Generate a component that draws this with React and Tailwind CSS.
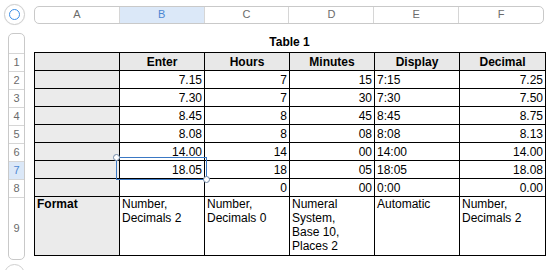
import React from "react";

const cols = ["A", "B", "C", "D", "E", "F"];

const rows = [
  ["7.15", "7", "15", "7:15", "7.25"],
  ["7.30", "7", "30", "7:30", "7.50"],
  ["8.45", "8", "45", "8:45", "8.75"],
  ["8.08", "8", "08", "8:08", "8.13"],
  ["14.00", "14", "00", "14:00", "14.00"],
  ["18.05", "18", "05", "18:05", "18.08"],
  ["", "0", "00", "0:00", "0.00"],
];

export default function App() {
  return (
    <div
      className="w-[550px] h-[270px] bg-white overflow-hidden text-[12px] text-black"
      style={{ fontFamily: '"Liberation Sans", Arial, sans-serif' }}
    >
      {/* top bar */}
      <div className="flex items-center pt-[4px]">
        <div className="ml-[4px] w-[21px] h-[21px] rounded-full border border-[#cfcfcf] bg-white flex items-center justify-center shadow-[0_0_1px_rgba(0,0,0,0.1)]">
          <div className="w-[11px] h-[11px] rounded-full border-[1.5px] border-[#3b8ee6]" />
        </div>
        <div className="ml-[9px] w-[510px] h-[18px] rounded-[5px] border border-[#c9c9c9] flex overflow-hidden text-[11px] text-[#6b6b6b]">
          {cols.map((c, i) => (
            <div
              key={c}
              className={
                "flex-1 flex items-center justify-center " +
                (i > 0 ? "border-l border-[#d6d6d6] " : "") +
                (c === "B" ? "bg-[#dbe8f8] text-[#4a86d2]" : "")
              }
            >
              {c}
            </div>
          ))}
        </div>
      </div>

      <div className="flex mt-[8px]">
        {/* row header strip */}
        <div className="ml-[8px] w-[17px] flex flex-col border border-[#c9c9c9] rounded-[5px] overflow-hidden text-[11px] text-[#6b6b6b] h-[227px]">
          <div className="h-[19px] shrink-0" />
          {[1, 2, 3, 4, 5, 6, 7, 8].map((n) => (
            <div
              key={n}
              className={
                "h-[18px] shrink-0 border-t border-[#d6d6d6] flex items-center justify-center " +
                (n === 7 ? "bg-[#dbe8f8] text-[#4a86d2]" : "")
              }
            >
              {n}
            </div>
          ))}
          <div className="flex-1 border-t border-[#d6d6d6] flex items-center justify-center">
            9
          </div>
        </div>

        {/* table area */}
        <div className="ml-[9px] relative">
          <div className="h-[19px] flex items-end justify-center font-bold text-[12px] pb-[1px] w-[511px]">
            Table 1
          </div>
          <table className="border-collapse table-fixed w-[511px]">
            <colgroup>
              <col className="w-[85px]" />
              <col className="w-[85px]" />
              <col className="w-[85px]" />
              <col className="w-[85px]" />
              <col className="w-[85px]" />
              <col className="w-[86px]" />
            </colgroup>
            <tbody>
              <tr className="h-[18px] bg-[#e8e8e8] font-bold">
                <td className="border border-black p-0" />
                <td className="border border-black p-0 text-center leading-[16px]">Enter</td>
                <td className="border border-black p-0 text-center leading-[16px]">Hours</td>
                <td className="border border-black p-0 text-center leading-[16px]">Minutes</td>
                <td className="border border-black p-0 text-center leading-[16px]">Display</td>
                <td className="border border-black p-0 text-center leading-[16px]">Decimal</td>
              </tr>
              {rows.map((r, i) => (
                <tr key={i} className="h-[18px]">
                  <td className="border border-black p-0 bg-[#ebebeb]" />
                  <td className="border border-black p-0 pr-[2px] text-right leading-[16px]">{r[0]}</td>
                  <td className="border border-black p-0 pr-[2px] text-right leading-[16px]">{r[1]}</td>
                  <td className="border border-black p-0 pr-[2px] text-right leading-[16px]">{r[2]}</td>
                  <td className="border border-black p-0 pl-[2px] text-left leading-[16px]">{r[3]}</td>
                  <td className="border border-black p-0 pr-[2px] text-right leading-[16px]">{r[4]}</td>
                </tr>
              ))}
              <tr className="h-[59px] align-top">
                <td className="border border-black p-0 pl-[2px] bg-[#ebebeb] font-bold leading-[14px]">Format</td>
                <td className="border border-black p-0 pl-[2px] leading-[14px]">Number,<br />Decimals 2</td>
                <td className="border border-black p-0 pl-[2px] leading-[14px]">Number,<br />Decimals 0</td>
                <td className="border border-black p-0 pl-[2px] leading-[14px]">Numeral<br />System,<br />Base 10,<br />Places 2</td>
                <td className="border border-black p-0 pl-[2px] leading-[14px]">Automatic</td>
                <td className="border border-black p-0 pl-[2px] leading-[14px]">Number,<br />Decimals 2</td>
              </tr>
            </tbody>
          </table>

          {/* selection overlay on B7 */}
          <div className="absolute left-[82px] top-[124px] w-[91px] h-[23px] border border-[#3a78c4] pointer-events-none" />
          <div className="absolute left-[79px] top-[121px] w-[7px] h-[7px] rounded-full bg-white border border-[#6f87a6]" />
          <div className="absolute left-[169px] top-[143px] w-[7px] h-[7px] rounded-full bg-white border border-[#6f87a6]" />
        </div>
      </div>

      {/* bottom add button */}
      <div className="ml-[4px] mt-[4px] w-[21px] h-[21px] rounded-full border border-[#cfcfcf] bg-white" />
    </div>
  );
}
